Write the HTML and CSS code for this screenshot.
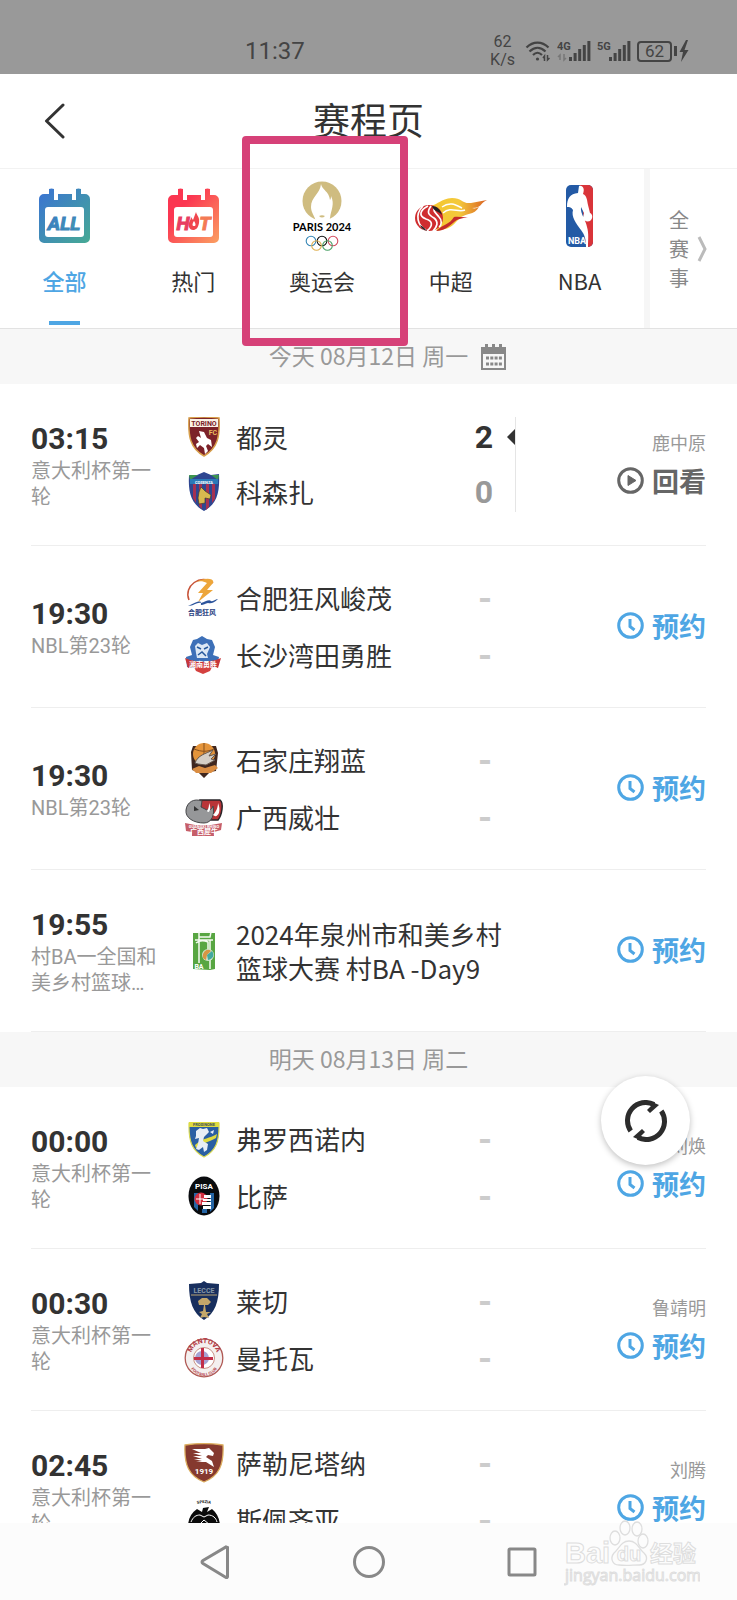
FILE: index.html
```html
<!DOCTYPE html>
<html lang="zh-CN">
  <head>
    <meta charset="utf-8">
    <meta name="viewport" content="width=device-width, initial-scale=1">
    <title>赛程页</title>
    <link rel="stylesheet" href="styles.css">
  </head>
  <body>
    <!-- Shared icons -->
    <svg class="sprite" width="0" height="0" aria-hidden="true">
      <symbol id="icon-clock" viewBox="0 0 27 27">
        <circle cx="13.5" cy="13.5" r="11.8" fill="none" stroke="currentColor" stroke-width="3"/>
        <path d="M13 7v7.5l4.5 3.5" fill="none" stroke="currentColor" stroke-width="3"/>
      </symbol>
      <symbol id="icon-play" viewBox="0 0 27 27">
        <circle cx="13.5" cy="13.5" r="11.8" fill="none" stroke="currentColor" stroke-width="3"/>
        <path d="M11 8.5l8 5-8 5z" fill="currentColor" stroke="currentColor" stroke-linejoin="round"/>
      </symbol>
    </svg>

    <div class="status-bar">
      <span class="status-time">11:37</span>
      <div class="status-icons">
        <span class="speed">62<br>K/s</span>
        <svg width="26" height="22" viewBox="0 0 26 22" fill="none" stroke="#444" stroke-width="2.2">
          <path d="M1.5 7.5C8 1 17 1 23.500 7.500M4.500 11.500C9.500 6.500 15.500 6.500 20.500 11.500M8 15C11 12 14 12 17 15"/>
          <circle cx="12.500" cy="19" r="1.600" fill="#444" stroke="none"/>
          <path d="M19.500 21v-5l-1.500 2M22.500 15v5l2-2" stroke-width="1.500"/>
        </svg>
        <svg width="34" height="22" viewBox="0 0 34 22" fill="#444">
          <text x="0" y="10" class="net-label">4G</text>
          <path d="M3 20v-5l-2 2M7 14v6l2-2" fill="none" stroke="#777" stroke-width="1.500"/>
          <path d="M12 17h3v4h-3zM16.600 13h3v8h-3zM21.200 9h3v12h-3zM25.800 5h3v16h-3zM30.400 1h3v20h-3z"/>
        </svg>
        <svg width="34" height="22" viewBox="0 0 34 22" fill="#444">
          <text x="0" y="10" class="net-label">5G</text>
          <path d="M12 17h3v4h-3zM16.600 13h3v8h-3zM21.200 9h3v12h-3zM25.800 5h3v16h-3zM30.400 1h3v20h-3z"/>
        </svg>
        <span class="battery">62</span>
        <svg class="bolt" width="15" height="22" viewBox="0 0 15 22" fill="#444">
          <path d="M0 6h3v10H0zM12 0L5.500 12h3.500L7 22l7.500-12h-4L14 0z"/>
        </svg>
      </div>
    </div>

    <header class="header">
      <button class="back" aria-label="返回">
        <svg width="22" height="36" viewBox="0 0 22 36" fill="none" stroke="#333" stroke-width="3" stroke-linecap="round" stroke-linejoin="round">
          <path d="M19 2L2.500 18 19 34"/>
        </svg>
      </button>
      <h1>赛程页</h1>
    </header>

    <nav class="tabs">
      <button class="tab active">
        <span class="tab-icon">
          <svg width="51" height="56" viewBox="0 0 51 56">
            <defs>
              <linearGradient id="blue" x1="0" y1="0" x2="1" y2="1">
                <stop offset="0" stop-color="#3a72d4"/>
                <stop offset="1" stop-color="#46aa94"/>
              </linearGradient>
            </defs>
            <path d="M5 6h5V1q2.500-1 5 0v11h4V6h14v6h4V1q2.500-1 5 0v5h4a5 5 0 0 1 5 5v39a5 5 0 0 1-5 5H5a5 5 0 0 1-5-5V11a5 5 0 0 1 5-5z" fill="url(#blue)"/>
            <rect x="6" y="19" width="39" height="30" rx="3" fill="#fff"/>
            <text x="25" y="42" text-anchor="middle" class="cal-text" fill="url(#blue)" stroke="#3b83bd">ALL</text>
          </svg>
        </span>
        <span class="tab-label">全部</span>
      </button>
      <button class="tab">
        <span class="tab-icon">
          <svg width="51" height="56" viewBox="0 0 51 56">
            <defs>
              <linearGradient id="red" x1="0" y1="0" x2="1" y2="1">
                <stop offset="0.300" stop-color="#fb3651"/>
                <stop offset="1" stop-color="#fba062"/>
              </linearGradient>
            </defs>
            <path d="M5 7h5V1q2.500-1 5 0v11h4V7h14v5h4V1q2.500-1 5 0v6h4a5 5 0 0 1 5 5v38a5 5 0 0 1-5 5H5a5 5 0 0 1-5-5V12a5 5 0 0 1 5-5z" fill="url(#red)"/>
            <rect x="6" y="19" width="39" height="30" rx="3" fill="#fff"/>
            <text x="15" y="42" text-anchor="middle" class="cal-text" fill="#e83e62" stroke="#e83e62">H</text>
            <path d="M28 24c1 4 4 5 3 11-1 5-3 7-6 7s-5-3-4-7c1-3 2-4 2-6l2 3zm-2 9c-2 3-2 5 0 5s2-2 0-5z" fill="#f0464e" fill-rule="evenodd"/>
            <text x="37" y="42" text-anchor="middle" class="cal-text" fill="#f47a55" stroke="#f47a55">T</text>
          </svg>
        </span>
        <span class="tab-label">热门</span>
      </button>
      <button class="tab marked">
        <span class="tab-icon">
          <svg width="64" height="70" viewBox="0 0 64 70">
            <circle cx="32" cy="20" r="19.500" fill="#cfbc80"/>
            <path d="M31 3c1 6 8 7 9 16 1-1 1-3 1-4 4 8 0 14-1 22l-1 4H26c-1-6-5-9-5-15 0-10 9-13 10-23z" fill="#fff"/>
            <path d="M29 35c2-1 4-1 6 0-2 2-4 2-6 0z" fill="#cfbc80"/>
            <text x="32" y="50" text-anchor="middle" class="paris-text">PARIS 2024</text>
            <g fill="none" stroke-width="1.100">
              <circle cx="21" cy="60" r="4.800" stroke="#3586b5"/>
              <circle cx="32" cy="60" r="4.800" stroke="#111"/>
              <circle cx="43" cy="60" r="4.800" stroke="#d24c5f"/>
              <circle cx="26.500" cy="64.500" r="4.800" stroke="#dfb052"/>
              <circle cx="37.500" cy="64.500" r="4.800" stroke="#4ba066"/>
            </g>
          </svg>
        </span>
        <span class="tab-label">奥运会</span>
      </button>
      <button class="tab">
        <span class="tab-icon">
          <svg width="72" height="36" viewBox="0 0 72 36">
            <defs>
              <linearGradient id="flame" x1="0" y1="0" x2="1" y2="0">
                <stop offset="0" stop-color="#f3c62f"/>
                <stop offset="0.500" stop-color="#f4c93c"/>
                <stop offset="1" stop-color="#d96022"/>
              </linearGradient>
            </defs>
            <path d="M16 8C24 6 25 1 37 0c10 0 10 6 19 5l16-3c-7 3-5 8-15 8 3 1 5 0 7-1-5 9-13 5-20 12-4 4-8 9-14 10l-8 2z" fill="url(#flame)"/>
            <path d="M21 33c9-8 13-6 18-14 5-1 9 1 14 0-7 2-10 1-15 6-5 4-9 8-17 8z" fill="#c42b2b"/>
            <path d="M27 9c8-6 14-2 20 1M28 15c8-7 15 0 22-3" fill="none" stroke="#fff" stroke-width="1.500"/>
            <ellipse cx="14" cy="20" rx="14" ry="13" fill="#cf2d2f"/>
            <path d="M8 8C-1 17 3 28 11 32M13 8c-8 4-10 10-2 13 7 2 7 7 1 12M16 8c-5 7-2 9 3 12 5 4 3 9-1 13M20 9c-3 4 1 6 4 10 3 3 3 8 0 10" fill="none" stroke="#fff" stroke-width="1.700"/>
            <path d="M17 8c5 0 9 4 10 9-3-4-8-3-10-9zM5 27c4 2 5 4 7 6-4-1-6-3-7-6z" fill="#222"/>
          </svg>
        </span>
        <span class="tab-label">中超</span>
      </button>
      <button class="tab">
        <span class="tab-icon">
          <svg width="27" height="62" viewBox="0 0 27 62">
            <clipPath id="nba-clip"><rect width="27" height="62" rx="5"/></clipPath>
            <g clip-path="url(#nba-clip)">
              <path d="M0 0h27v62H0z" fill="#235aa5"/>
              <path d="M14 0h13v62h-6z" fill="#d93439"/>
              <path d="M13 1c4-1 6 3 4 8 4 2 4 6 5 11l2 8c3 1 3 6 0 8-3 1-6 0-7-3l1-5-3-6c-1 7 5 13 6 20 2 7 1 13 1 20h-2c0-7-1-12-5-17C10 38 5 32 7 25c-2-3-3-3-6-3 0-9 3-13 11-14z" fill="#fff"/>
            </g>
            <text x="2" y="59" class="nba-text">NBA</text>
          </svg>
        </span>
        <span class="tab-label">NBA</span>
      </button>
      <button class="all-events">
        <span class="all-text">全<br>赛<br>事</span>
        <svg width="10" height="26" viewBox="0 0 10 26" fill="none" stroke="#bbb" stroke-width="3">
          <path d="M2 1l6 12-6 12"/>
        </svg>
      </button>
    </nav>

    <main class="schedule">
      <h2 class="date-bar">
        <span class="date">今天 08月12日 周一</span>
        <svg class="calendar" width="25" height="26" viewBox="0 0 25 26" fill="#888">
          <path d="M0 3h4V0h3v3h4V0h3v3h4V0h3v3h4v23H0z"/>
          <path d="M2 10h21v14H2z" fill="#f7f7f7"/>
          <path d="M5 12.500h3v3H5zM9.300 12.500h3v3h-3zM13.600 12.500h3v3h-3zM17.900 12.500h3v3h-3zM5 18.500h3v3H5zM9.300 18.500h3v3h-3zM13.600 18.500h3v3h-3zM17.900 18.500h3v3h-3z"/>
        </svg>
      </h2>

      <article class="match finished">
        <div class="when">
          <time>03:15</time>
          <p>意大利杯第一轮</p>
        </div>
        <div class="teams">
          <div class="team">
            <svg class="logo" viewBox="0 0 40 40">
              <path d="M5 1q15-2 30 0c1 18-1 30-15 38C6 31 4 19 5 1z" fill="#7c2229" stroke="#d8a04c" stroke-width="1.500"/>
              <path d="M6 2h28v8H6z" fill="#fbf3e6"/>
              <text x="20" y="9" text-anchor="middle" class="logo-text" fill="#7c2229">TORINO</text>
              <text x="29" y="18" text-anchor="middle" class="logo-text" fill="#e9bd60">FC</text>
              <path d="M15 14l5 1 3 6 4 2 1 7-4-3-2 2 2 5-3 3-1-6-4-3-3 3-1-4 3-2-3-4 2-2 3 2z" fill="#fff"/>
            </svg>
            <span class="name">都灵</span>
            <span class="score">2</span>
          </div>
          <div class="team">
            <svg class="logo" viewBox="0 0 40 40">
              <path d="M5 4l8-1 7-3 7 3 8-1c1 18-2 30-15 37C7 32 4 20 5 4z" fill="#2e4691"/>
              <path d="M9 12h3v19L9 26zM15 12h3v25l-3-3zM22 12h3v23l-3 3zM28 12h3v15l-3 4z" fill="#a53152"/>
              <path d="M5 3l9 0-8 5zM35 3h-8l7 5z" fill="#3d9550"/>
              <path d="M6 7h28v5H6z" fill="#2a79b8"/>
              <text x="20" y="12" text-anchor="middle" class="logo-tiny" fill="#fff">COSENZA</text>
              <path d="M15 20l2-5 4 4 6 4-1 4-5-1v5l-6 1-1-6z" fill="#d8b94f" stroke="#4d3928" stroke-width="0.700"/>
            </svg>
            <span class="name">科森扎</span>
            <span class="score lost">0</span>
          </div>
        </div>
        <div class="action">
          <span class="host">鹿中原</span>
          <button class="replay"><svg><use href="#icon-play"/></svg>回看</button>
        </div>
      </article>

      <article class="match">
        <div class="when">
          <time>19:30</time>
          <p>NBL第23轮</p>
        </div>
        <div class="teams">
          <div class="team">
            <svg class="logo" viewBox="0 0 40 40">
              <path d="M5 22C-1 8 17-5 29 5" fill="none" stroke="#c75338" stroke-width="1.500"/>
              <path d="M12 4c9-5 19-4 17 1l-6 7h6L14 24l5-9h-5l9-10c-4-2-7-2-11-1z" fill="#eda63a"/>
              <path d="M4 28c8-4 13-6 13-3 4-1 8-4 10-2 2 1 5-2 7-2-4 4-7 5-10 4-4 1-8 4-7 0-4-1-7 3-13 3z" fill="#2c549c"/>
              <text x="18" y="37" text-anchor="middle" class="logo-cn" fill="#294181">合肥狂风</text>
            </svg>
            <span class="name">合肥狂风峻茂</span>
            <span class="score none">-</span>
          </div>
          <div class="team">
            <svg class="logo" viewBox="0 0 40 40">
              <path d="M9 5l4-1 5-3 5 3 5 1 3 7-2 8 6 2-2 10-9 1-6 4-6-4-9-1-1-10 6-2-2-8z" fill="#3d70b8"/>
              <path d="M11 11l3-3 4 2 5-2 3 4-3 7 1 4H13l-1-5z" fill="#dce8f5"/>
              <path d="M13 12l4 2M24 12l-4 2M14 20l4-3 4 4" fill="none" stroke="#26589c" stroke-width="1.500"/>
              <path d="M9 30c5-3 13-3 20 0l-3 6-7 3-7-3z" fill="#d4413f"/>
              <path d="M1 23c12 5 24 5 36 0l-3 10c-10-3-20-3-30 0z" fill="#c8373b"/>
              <text x="19" y="32" text-anchor="middle" class="logo-cn" fill="#fff">湘南勇胜</text>
            </svg>
            <span class="name">长沙湾田勇胜</span>
            <span class="score none">-</span>
          </div>
        </div>
        <div class="action">
          <button><svg><use href="#icon-clock"/></svg>预约</button>
        </div>
      </article>

      <article class="match">
        <div class="when">
          <time>19:30</time>
          <p>NBL第23轮</p>
        </div>
        <div class="teams">
          <div class="team">
            <svg class="logo" viewBox="0 0 40 40">
              <path d="M7 12l2-6h6l5-3 6 3h6l2 7-2 18-6 1-6 6-6-6-6-2z" fill="#40271f"/>
              <circle cx="20" cy="14" r="11" fill="#e4943b"/>
              <path d="M20 3v22M10 9c8 3 13 3 20 0" fill="none" stroke="#85501f"/>
              <path d="M11 23c3-8 10-9 18-13l-4 6 7-2-5 5 4 1-9 5-8-1z" fill="#d5cec5" stroke="#635851"/>
              <path d="M8 29l7-3 6 2 10-3 3 3-7 5H12z" fill="#da8d42"/>
            </svg>
            <span class="name">石家庄翔蓝</span>
            <span class="score none">-</span>
          </div>
          <div class="team">
            <svg class="logo" viewBox="0 0 40 40">
              <path d="M16 3h20c4 3 2 15-2 20H18z" fill="#b93438" stroke="#282428" stroke-width="1.500"/>
              <path d="M2 13C3 5 10 1 18 4l-1 6 4 2c3 2 7 1 8-3 2 8-1 17-9 17C10 26 1 21 2 13z" fill="#969799" stroke="#454548"/>
              <path d="M23 14c2-3 2-6 2-8 3 6 0 11-2 8zM29 18c4-4 5-9 5-12 4 9-1 16-5 12z" fill="#fff"/>
              <path d="M10 9l5 4-5 1z" fill="#333"/>
              <path d="M1 26l10 2h16l11-2-1 7-7 2v4H8v-4l-6-1z" fill="#c65e69"/>
              <text x="20" y="31" text-anchor="middle" class="logo-tiny" fill="#fff">GUANGXI RHINO</text>
              <text x="20" y="37" text-anchor="middle" class="logo-cn" fill="#fff">广西犀牛</text>
            </svg>
            <span class="name">广西威壮</span>
            <span class="score none">-</span>
          </div>
        </div>
        <div class="action">
          <button><svg><use href="#icon-clock"/></svg>预约</button>
        </div>
      </article>

      <article class="match">
        <div class="when">
          <time>19:55</time>
          <p class="clamp">村BA一全国和美乡村篮球大赛</p>
        </div>
        <div class="teams">
          <div class="team">
            <svg class="logo" viewBox="0 0 40 40">
              <path d="M9 2h22v36l-5 1-17-1z" fill="#58a642"/>
              <path d="M15 1h12l-1 5H15zM11 9h18M15 5v27M12 12c4-3 7-3 12-1v15M26 9v29" fill="none" stroke="#f5fbf2" stroke-width="1.500"/>
              <circle cx="24" cy="24" r="6" fill="#d2e6cd"/>
              <path d="M19 23c2-5 6-5 8-3l-4 4-1 5c-3-1-4-3-3-6z" fill="#d79644"/>
              <path d="M23 24l5-4c3 4 1 8-4 9z" fill="#42a8a0"/>
              <text x="15" y="38" text-anchor="middle" class="logo-text" fill="#fff">BA</text>
            </svg>
            <span class="name">2024年泉州市和美乡村篮球大赛 村BA -Day9</span>
          </div>
        </div>
        <div class="action">
          <button><svg><use href="#icon-clock"/></svg>预约</button>
        </div>
      </article>

      <h2 class="date-bar">
        <span class="date">明天 08月13日 周二</span>
      </h2>

      <article class="match">
        <div class="when">
          <time>00:00</time>
          <p>意大利杯第一轮</p>
        </div>
        <div class="teams">
          <div class="team">
            <svg class="logo" viewBox="0 0 40 40">
              <path d="M5 4h30v4c0 14-3 24-15 30C8 32 5 22 5 8z" fill="#2a5fa3" stroke="#d8d954" stroke-width="1.200"/>
              <path d="M5 3h30v5H5z" fill="#dfdb40"/>
              <text x="20" y="7" text-anchor="middle" class="logo-tiny" fill="#394d57">FROSINONE</text>
              <path d="M11 26c9-8 14-6 22-11l-1 4c-8 5-13 4-20 10z" fill="#dfdb40"/>
              <path d="M12 12l4-3 3 1 4-1 2 4-3 3-2 2-1 4 5 3-1 6-3 2-1-5-4 3-3-1 2-5 1-6-4 1 1-3z" fill="#e8eef5"/>
              <path d="M26 13l4-2-1 4z" fill="#e8eef5"/>
            </svg>
            <span class="name">弗罗西诺内</span>
            <span class="score none">-</span>
          </div>
          <div class="team">
            <svg class="logo" viewBox="0 0 40 40">
              <ellipse cx="20" cy="20" rx="15.500" ry="19.500" fill="#090b0e"/>
              <path d="M10 17h4v18l-4-4zM26 17h4v15l-4 4zM18 33h5v4h-5z" fill="#2565a5"/>
              <text x="20" y="13" text-anchor="middle" class="pisa-text" fill="#fff">PISA</text>
              <circle cx="17" cy="23" r="6.500" fill="#d32e3f"/>
              <path d="M16 18v10M12 23h8" stroke="#fff"/>
              <path d="M20 19h7v3h-7zM19 23h8v2h-8zM18 26h9v3h-9zM19 30h8v3h-8z" fill="#fff"/>
            </svg>
            <span class="name">比萨</span>
            <span class="score none">-</span>
          </div>
        </div>
        <div class="action">
          <span class="host">刘焕</span>
          <button><svg><use href="#icon-clock"/></svg>预约</button>
        </div>
      </article>

      <article class="match">
        <div class="when">
          <time>00:30</time>
          <p>意大利杯第一轮</p>
        </div>
        <div class="teams">
          <div class="team">
            <svg class="logo" viewBox="0 0 40 40">
              <path d="M5 3l12-1 3-2 3 2 12 1c0 18-4 29-15 36C9 32 5 21 5 3z" fill="#182f5e"/>
              <text x="20" y="12" text-anchor="middle" class="logo-text" fill="#8798a5">LECCE</text>
              <path d="M7 14h26" stroke="#b8a370"/>
              <path d="M14 20l4-3h5l4 4-3 3h-3l1 7h5l-4 2 2 4-5-1-4 1 2-4-3-2 4-1 1-6h-5z" fill="#c3a76a"/>
            </svg>
            <span class="name">莱切</span>
            <span class="score none">-</span>
          </div>
          <div class="team">
            <svg class="logo" viewBox="0 0 40 40">
              <circle cx="20" cy="20" r="18.800" fill="#f4f0ef" stroke="#b05a55" stroke-width="1.300"/>
              <circle cx="20" cy="20" r="10.500" fill="#fff" stroke="#c99185"/>
              <circle cx="18" cy="20" r="7" fill="#a6a2d2"/>
              <path d="M17 10h3v9h9v3h-9v8h-3v-8h-7v-3h7z" fill="#c22e48"/>
              <path id="arc-top" d="M7 18a13 13 0 0 1 26 0" fill="none"/>
              <path id="arc-bottom" d="M5 23a15 15 0 0 0 30 0" fill="none"/>
              <text class="logo-text" fill="#b43b46"><textPath href="#arc-top" startOffset="50%" text-anchor="middle">MANTOVA</textPath></text>
              <text class="logo-tiny" fill="#b43b46"><textPath href="#arc-bottom" startOffset="50%" text-anchor="middle">FOOTBALL CLUB</textPath></text>
            </svg>
            <span class="name">曼托瓦</span>
            <span class="score none">-</span>
          </div>
        </div>
        <div class="action">
          <span class="host">鲁靖明</span>
          <button><svg><use href="#icon-clock"/></svg>预约</button>
        </div>
      </article>

      <article class="match">
        <div class="when">
          <time>02:45</time>
          <p>意大利杯第一轮</p>
        </div>
        <div class="teams">
          <div class="team">
            <svg class="logo" viewBox="0 0 40 40">
              <path d="M1 2q19-3 38 0c1 20-4 31-19 37C5 33 0 22 1 2z" fill="#85392f" stroke="#dcae60" stroke-width="1.300"/>
              <path d="M8 6h13l4-1 5 5-1 3-5-1-2 2 6 4 2 6-8-5H12l6-1-8-2h8l-9-3h9l-9-3h8z" fill="#fff"/>
              <text x="20" y="31" text-anchor="middle" class="pisa-text" fill="#fff">1919</text>
            </svg>
            <span class="name">萨勒尼塔纳</span>
            <span class="score none">-</span>
          </div>
          <div class="team">
            <svg class="logo" viewBox="0 0 40 40">
              <path id="arc-spezia" d="M11 5q9-4 18 0" fill="none"/>
              <text class="logo-tiny" fill="#111"><textPath href="#arc-spezia" startOffset="50%" text-anchor="middle">SPEZIA</textPath></text>
              <path d="M4 27c0-8 3-14 9-18l5 3 1-4 6-1-2 5 5-3c5 4 8 10 8 18l-5 8H9z" fill="#0b0b0b"/>
              <path d="M7 22c2-5 5-7 9-7l4 2 4-2c5 0 8 3 9 7M15 25l5-5 6 5" fill="none" stroke="#fff"/>
            </svg>
            <span class="name">斯佩齐亚</span>
            <span class="score none">-</span>
          </div>
        </div>
        <div class="action">
          <span class="host">刘腾</span>
          <button><svg><use href="#icon-clock"/></svg>预约</button>
        </div>
      </article>

      <button class="refresh" aria-label="刷新">
        <svg width="42" height="42" viewBox="0 0 42 42">
          <path d="M5.700 31A18.200 18.200 0 0 1 29 4.500M36.300 11A18.200 18.200 0 0 1 13 37.500" fill="none" stroke="#2c2c2c" stroke-width="5"/>
          <path d="M25 1l9 4-9 8-3-3 4-4zM17 41L8 37l9-8 3 3-4 4z" fill="#2c2c2c"/>
        </svg>
      </button>
    </main>

    <footer class="nav-bar">
      <button aria-label="返回键">
        <svg width="32" height="34" viewBox="0 0 32 34"><path d="M27.500 2.500v29a1 1 0 0 1-1.500 1L3 18.500q-2-1.500 0-3L26 2z"/></svg>
      </button>
      <button aria-label="主屏幕">
        <svg width="34" height="34" viewBox="0 0 34 34"><circle cx="17" cy="17" r="14.500"/></svg>
      </button>
      <button aria-label="最近任务">
        <svg width="32" height="34" viewBox="0 0 32 34"><rect x="3" y="4" width="26" height="26" rx="1"/></svg>
      </button>
      <div class="watermark">
        <svg width="136" height="66" viewBox="0 0 136 66">
          <text x="1" y="43" class="mark-latin">Bai</text>
          <g fill="#fcfcfc" stroke="#dedede" stroke-width="1.300">
            <path d="M65 21c8 0 10 8 15 12 5 5 2 12-5 12-6 0-13 1-20 0-7 0-9-7-5-12 5-4 7-12 15-12z"/>
            <ellipse cx="51" cy="18" rx="5" ry="7"/>
            <ellipse cx="61" cy="8" rx="5" ry="7"/>
            <ellipse cx="73" cy="9" rx="5" ry="7"/>
            <ellipse cx="79" cy="21" rx="5" ry="7"/>
          </g>
          <text x="65" y="41" text-anchor="middle" class="mark-du">du</text>
          <text x="86" y="42" class="mark-cn">经验</text>
          <text x="1" y="61" class="mark-url">jingyan.baidu.com</text>
        </svg>
      </div>
    </footer>
  </body>
</html>
```

FILE: styles.css
```css
* {
  box-sizing: border-box;
}

body {
  margin: 0;
  height: 100vh;
  display: flex;
  flex-direction: column;
  overflow: hidden;
  font-family: "Noto Sans CJK SC", sans-serif;
  color: #333;
  background: #fff;
}

h1,
h2,
p {
  margin: 0;
  font-weight: 400;
}

button {
  padding: 0;
  border: none;
  background: none;
  font-family: inherit;
  color: inherit;
  cursor: pointer;
}

svg {
  display: block;
  flex: none;
}

.sprite {
  position: absolute;
}

/* Status bar */
.status-bar {
  flex: none;
  display: flex;
  justify-content: space-between;
  height: 74px;
  padding: 28px 48px 0 245px;
  background: #999;
  color: #444;
  font-family: Roboto, sans-serif;
}

.status-time {
  font-size: 24px;
  line-height: 46px;
}

.status-icons {
  display: flex;
  align-items: center;
  gap: 6px;
  height: 46px;
}

.speed {
  margin-right: 4px;
  font-size: 16px;
  line-height: 18px;
  text-align: center;
}

.net-label {
  font: bold 11px Roboto, sans-serif;
}

.battery {
  width: 35px;
  height: 21px;
  border: 2px solid #444;
  border-radius: 4px;
  font-size: 17px;
  line-height: 17px;
  text-align: center;
}

.bolt {
  margin-left: -4px;
}

/* Header */
.header {
  flex: none;
  display: grid;
  grid-template-columns: 1fr auto 1fr;
  align-items: center;
  height: 95px;
  padding: 0 44px;
  border-bottom: 1px solid #f2f2f2;
}

.back {
  justify-self: start;
}

.header h1 {
  padding-bottom: 4px;
  font-size: 37px;
  line-height: 48px;
}

/* Competition tabs */
.tabs {
  flex: none;
  display: flex;
  height: 160px;
  border-bottom: 1px solid #e2e2e2;
}

.tab {
  position: relative;
  flex: 1;
  display: flex;
  flex-direction: column;
  align-items: center;
  padding-top: 12px;
}

.tab-icon {
  display: flex;
  align-items: center;
  height: 70px;
}

.tab-label {
  margin-top: 13px;
  font-size: 22px;
  line-height: 32px;
}

.tab.active {
  color: #4ea6e4;
}

.tab.active .tab-label {
  font-weight: 500;
}

.tab.active::after {
  content: "";
  position: absolute;
  bottom: 3px;
  width: 31px;
  height: 4px;
  background: #4ea6e4;
}

.tab.marked::after {
  content: "";
  position: absolute;
  z-index: 2;
  top: -33px;
  right: -22px;
  bottom: -18px;
  left: -16px;
  border: 8px solid #d64178;
  border-radius: 4px;
}

.cal-text {
  font: italic bold 19px Roboto, sans-serif;
  stroke-width: 1px;
}

.paris-text {
  font: bold 11px Lato, sans-serif;
}

.nba-text {
  font: bold 9px Roboto, sans-serif;
  fill: #fff;
}

.all-events {
  flex: none;
  display: flex;
  align-items: center;
  gap: 8px;
  width: 93px;
  padding-left: 19px;
  border-left: 6px solid #f6f6f6;
  color: #888;
}

.all-text {
  font-size: 20px;
  line-height: 29px;
}

/* Match list */
.schedule {
  position: relative;
  flex: 1;
  min-height: 0;
  overflow: hidden;
}

.date-bar {
  display: grid;
  grid-template-columns: 1fr auto 1fr;
  align-items: center;
  gap: 13px;
  height: 55px;
  background: #f7f7f7;
  color: #999;
}

.date {
  grid-column: 2;
  padding-bottom: 4px;
  font-size: 23px;
  line-height: 32px;
}

.match {
  display: flex;
  align-items: center;
  min-height: 162px;
  margin: 0 31px;
  border-bottom: 1px solid #eee;
}

.when {
  width: 128px;
  margin-right: 25px;
}

.when time {
  display: block;
  font: bold 30px/38px Roboto, sans-serif;
}

.when p {
  font-family: Roboto, "Noto Sans CJK SC", sans-serif;
  font-size: 20px;
  line-height: 26px;
  color: #999;
}

.when .clamp {
  display: -webkit-box;
  -webkit-box-orient: vertical;
  -webkit-line-clamp: 2;
  overflow: hidden;
}

.teams {
  position: relative;
  flex: 1;
  display: flex;
  flex-direction: column;
  gap: 15px;
  padding-right: 19px;
}

.team {
  display: flex;
  align-items: center;
  min-height: 40px;
}

.logo {
  width: 40px;
  height: 40px;
  margin-right: 12px;
}

.name {
  flex: 1;
  margin-right: -19px;
  font-size: 26px;
  line-height: 34px;
}

.score {
  width: 24px;
  font: bold 32px/40px Roboto, sans-serif;
  text-align: center;
}

.score.lost {
  color: #999;
}

.score.none {
  padding-top: 2px;
  font-size: 36px;
  color: #ccc;
}

/* Winner marker on the divider of a finished match */
.finished .teams {
  border-right: 1px solid #e5e5e5;
}

.finished .teams::after {
  content: "";
  position: absolute;
  top: 12px;
  right: 0;
  border: 8px solid transparent;
  border-right-color: #333;
  border-left-width: 0;
}

.action {
  width: 190px;
  display: flex;
  flex-direction: column;
  align-items: flex-end;
  padding-bottom: 2px;
}

.host {
  font-size: 18px;
  line-height: 34px;
  color: #999;
}

.action button {
  display: flex;
  align-items: center;
  gap: 8px;
  font-size: 27px;
  font-weight: 700;
  line-height: 44px;
  color: #4ea6e4;
}

.action button.replay {
  color: #666;
}

.action button svg {
  width: 27px;
  height: 27px;
}

.logo-text {
  font: bold 7px Roboto, sans-serif;
}

.logo-tiny {
  font: bold 4px Roboto, sans-serif;
}

.logo-cn {
  font: bold 7px "Noto Sans CJK SC", sans-serif;
}

.pisa-text {
  font: bold 8px Roboto, sans-serif;
}

.refresh {
  position: absolute;
  right: 47px;
  bottom: 358px;
  display: flex;
  align-items: center;
  justify-content: center;
  width: 89px;
  height: 89px;
  border-radius: 50%;
  background: #fff;
  box-shadow: 0 2px 6px rgba(0, 0, 0, 0.25);
}

/* System navigation */
.nav-bar {
  position: relative;
  flex: none;
  display: flex;
  align-items: center;
  justify-content: center;
  gap: 120px;
  height: 77px;
  background: #fcfcfc;
}

.nav-bar button svg {
  fill: none;
  stroke: #888;
  stroke-width: 3px;
}

.watermark {
  position: absolute;
  right: 37px;
  bottom: 14px;
}

.watermark text {
  fill: #fcfcfc;
  stroke: #dedede;
  stroke-width: 1px;
}

.mark-latin {
  font: bold 29px "Liberation Sans", sans-serif;
}

.mark-du {
  font: bold 20px "Liberation Sans", sans-serif;
}

.mark-cn {
  font: bold 23px "Noto Sans CJK SC", sans-serif;
}

.mark-url {
  font: 16px "Open Sans", sans-serif;
}
```
